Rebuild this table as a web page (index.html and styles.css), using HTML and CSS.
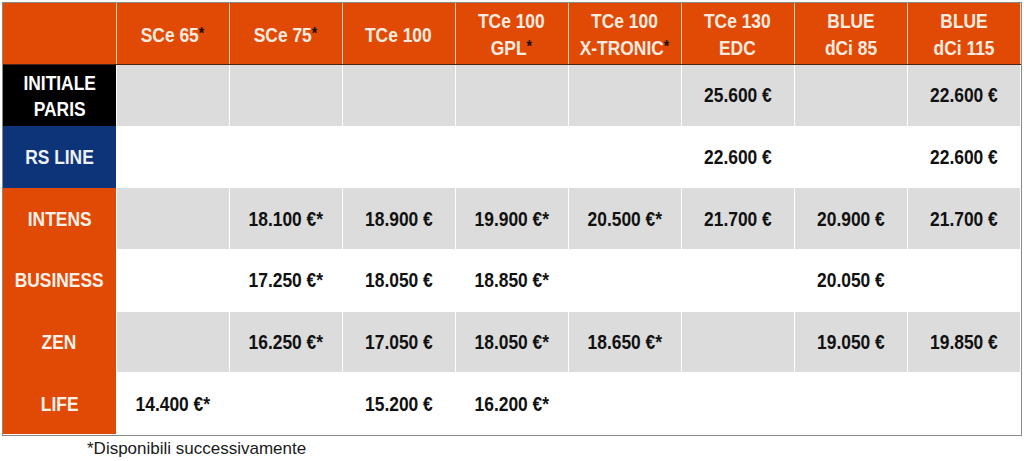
FILE: index.html
```html
<!DOCTYPE html>
<html lang="it">
<head>
<meta charset="utf-8">
<title>Listino prezzi</title>
<link rel="stylesheet" href="styles.css">
</head>
<body>
<div class="frame">
<table class="prices">
  <thead>
    <tr class="head">
      <th class="corner"></th>
      <th><span class="t">SCe 65<span class="ast">*</span></span></th>
      <th><span class="t">SCe 75<span class="ast">*</span></span></th>
      <th><span class="t">TCe 100</span></th>
      <th><span class="t">TCe 100<br>GPL<span class="ast">*</span></span></th>
      <th><span class="t">TCe 100<br>X-TRONIC<span class="ast">*</span></span></th>
      <th><span class="t">TCe 130<br>EDC</span></th>
      <th><span class="t">BLUE<br>dCi 85</span></th>
      <th><span class="t">BLUE<br>dCi 115</span></th>
    </tr>
  </thead>
  <tbody>
    <tr class="gray">
      <th class="lbl black"><span class="t">INITIALE<br>PARIS</span></th>
      <td></td><td></td><td></td><td></td><td></td>
      <td><span class="t">25.600 €</span></td><td></td><td><span class="t">22.600 €</span></td>
    </tr>
    <tr class="white">
      <th class="lbl blue"><span class="t">RS LINE</span></th>
      <td></td><td></td><td></td><td></td><td></td>
      <td><span class="t">22.600 €</span></td><td></td><td><span class="t">22.600 €</span></td>
    </tr>
    <tr class="gray">
      <th class="lbl orange"><span class="t">INTENS</span></th>
      <td></td><td><span class="t">18.100 €*</span></td><td><span class="t">18.900 €</span></td><td><span class="t">19.900 €*</span></td><td><span class="t">20.500 €*</span></td>
      <td><span class="t">21.700 €</span></td><td><span class="t">20.900 €</span></td><td><span class="t">21.700 €</span></td>
    </tr>
    <tr class="white">
      <th class="lbl orange"><span class="t">BUSINESS</span></th>
      <td></td><td><span class="t">17.250 €*</span></td><td><span class="t">18.050 €</span></td><td><span class="t">18.850 €*</span></td><td></td>
      <td></td><td><span class="t">20.050 €</span></td><td></td>
    </tr>
    <tr class="gray">
      <th class="lbl orange"><span class="t">ZEN</span></th>
      <td></td><td><span class="t">16.250 €*</span></td><td><span class="t">17.050 €</span></td><td><span class="t">18.050 €*</span></td><td><span class="t">18.650 €*</span></td>
      <td></td><td><span class="t">19.050 €</span></td><td><span class="t">19.850 €</span></td>
    </tr>
    <tr class="white">
      <th class="lbl orange"><span class="t">LIFE</span></th>
      <td><span class="t">14.400 €*</span></td><td></td><td><span class="t">15.200 €</span></td><td><span class="t">16.200 €*</span></td><td></td>
      <td></td><td></td><td></td>
    </tr>
  </tbody>
</table>
</div>
<p class="note">*Disponibili successivamente</p>
</body>
</html>
```

FILE: styles.css
```css
html, body {
  margin: 0;
  padding: 0;
  background: #ffffff;
}

body {
  font-family: "Liberation Sans", Arial, sans-serif;
}

.frame {
  margin: 2px 0 0 2px;
  width: 1018px;
  border: 1px solid #8a8a8a;
}

.prices {
  width: 1018px;
  table-layout: fixed;
  border-collapse: collapse;
  border-spacing: 0;
}

.prices th,
.prices td {
  padding: 0;
  text-align: center;
  vertical-align: middle;
  font-weight: bold;
  font-size: 20px;
  line-height: 26px;
  border: 1px solid #ffffff;
  white-space: nowrap;
}

/* narrow (Arial Narrow–like) rendering of the bold cell text */
.t {
  display: inline-block;
  transform: scaleX(0.87);
  transform-origin: center;
}

.head th {
  height: 58px;
  padding-top: 3px;
  background: #e14a04;
  color: #fcebe0;
  line-height: 27px;
  border-top: none;
  border-bottom: 1px solid #4a2410;
  border-left: 1px solid #f6cdb4;
  border-right: 1px solid #f6cdb4;
}

.head th.corner {
  border-left: none;
}

.ast {
  color: #111111;
  font-size: 16px;
  vertical-align: 3px;
  line-height: 0;
}

tbody tr {
  height: 61.67px;
}

tbody td {
  color: #111111;
}

.gray td {
  background: #dcdcdc;
}

.white td {
  background: #ffffff;
}

.lbl {
  color: #fbf1ea;
  border-top: none !important;
  border-bottom: none !important;
  border-left: none !important;
}

.lbl.black {
  background: #000000;
  color: #ffffff;
}

.lbl.blue {
  background: #0d3479;
  color: #eef1f7;
}

.lbl.orange {
  background: #e14a04;
}

.note {
  margin: 3px 0 0 87px;
  font-size: 17px;
  line-height: 20px;
  color: #1a1a1a;
}
```
